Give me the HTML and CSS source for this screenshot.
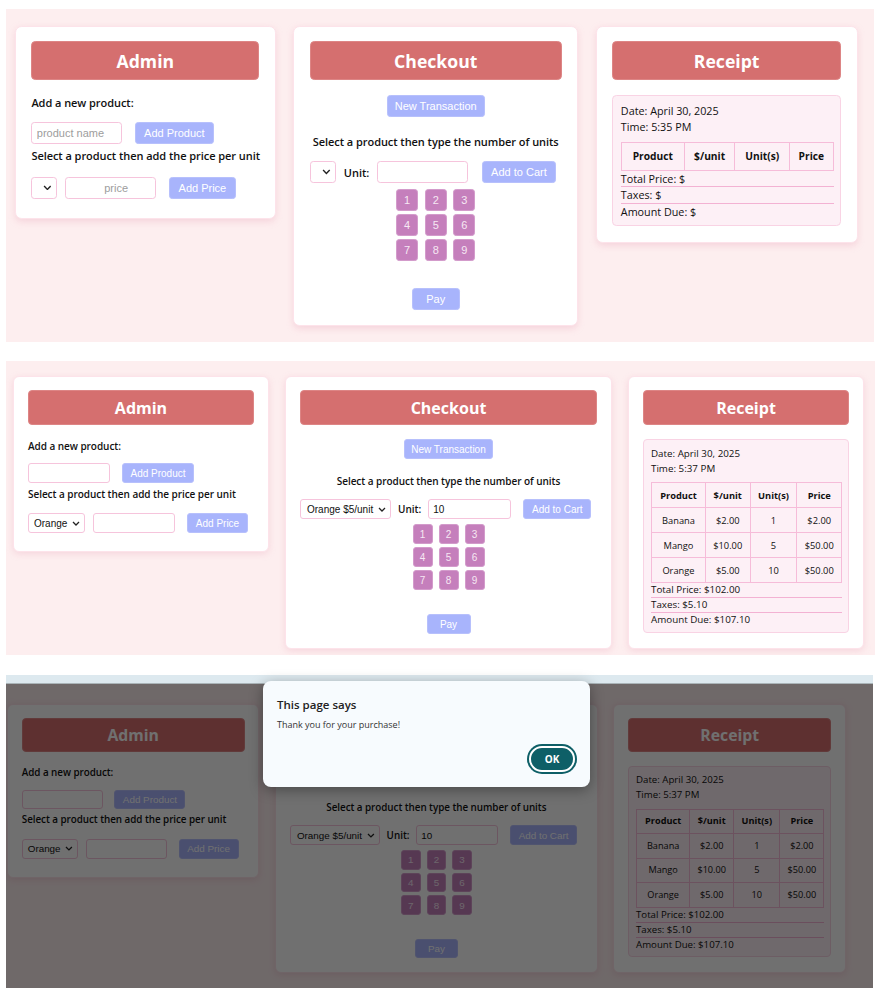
FILE: index.html
```html
<!DOCTYPE html>
<html lang="en">
<head>
<meta charset="utf-8">
<title>POS</title>
<link rel="stylesheet" href="styles.css">
</head>
<body>

<section class="shot shot-1">
  <div class="row row-1">
    <div class="card card-a1">
      <div class="card-title">Admin</div>
      <p class="lbl">Add a new product:</p>
      <div class="ctrl-row">
        <input class="inp inp-name" placeholder="product name">
        <button class="btn btn-addprod">Add Product</button>
      </div>
      <p class="lbl lbl-2">Select a product then add the price per unit</p>
      <div class="ctrl-row ctrl-row-2">
        <div class="sel sel-empty"><svg class="chev" viewBox="0 0 8 5"><path d="M1 1l3 3 3-3"/></svg></div>
        <input class="inp inp-price inp-center" placeholder="price">
        <button class="btn btn-addprice">Add Price</button>
      </div>
    </div>

    <div class="card card-c1">
      <div class="card-title">Checkout</div>
      <div class="center"><button class="btn btn-new">New Transaction</button></div>
      <p class="lbl lbl-center">Select a product then type the number of units</p>
      <div class="ctrl-row ctrl-row-co">
        <div class="sel sel-empty-co"><svg class="chev" viewBox="0 0 8 5"><path d="M1 1l3 3 3-3"/></svg></div>
        <span class="unit-lbl">Unit:</span>
        <input class="inp inp-unit">
        <button class="btn btn-cart">Add to Cart</button>
      </div>
      <div class="keypad">
        <button class="key">1</button><button class="key">2</button><button class="key">3</button>
        <button class="key">4</button><button class="key">5</button><button class="key">6</button>
        <button class="key">7</button><button class="key">8</button><button class="key">9</button>
      </div>
      <div class="center"><button class="btn btn-pay">Pay</button></div>
    </div>

    <div class="card card-r1">
      <div class="card-title">Receipt</div>
      <div class="rbox">
        <div class="rline">Date: April 30, 2025</div>
        <div class="rline">Time: 5:35 PM</div>
        <table class="rtable rtable-empty">
          <tr><th>Product</th><th>$/unit</th><th>Unit(s)</th><th>Price</th></tr>
        </table>
        <div class="tot">Total Price: $</div>
        <div class="tot">Taxes: $</div>
        <div class="tot tot-last">Amount Due: $</div>
      </div>
    </div>
  </div>
</section>

<section class="shot shot-2">
  <div class="row">
    <div class="card card-a2">
      <div class="card-title">Admin</div>
      <p class="lbl">Add a new product:</p>
      <div class="ctrl-row">
        <input class="inp inp-name">
        <button class="btn btn-addprod">Add Product</button>
      </div>
      <p class="lbl lbl-2">Select a product then add the price per unit</p>
      <div class="ctrl-row ctrl-row-2">
        <div class="sel sel-orange">Orange<svg class="chev" viewBox="0 0 8 5"><path d="M1 1l3 3 3-3"/></svg></div>
        <input class="inp inp-price">
        <button class="btn btn-addprice">Add Price</button>
      </div>
    </div>

    <div class="card card-c2">
      <div class="card-title">Checkout</div>
      <div class="center"><button class="btn btn-new">New Transaction</button></div>
      <p class="lbl lbl-center">Select a product then type the number of units</p>
      <div class="ctrl-row ctrl-row-co">
        <div class="sel sel-full">Orange $5/unit<svg class="chev" viewBox="0 0 8 5"><path d="M1 1l3 3 3-3"/></svg></div>
        <span class="unit-lbl">Unit:</span>
        <input class="inp inp-unit" value="10">
        <button class="btn btn-cart">Add to Cart</button>
      </div>
      <div class="keypad">
        <button class="key">1</button><button class="key">2</button><button class="key">3</button>
        <button class="key">4</button><button class="key">5</button><button class="key">6</button>
        <button class="key">7</button><button class="key">8</button><button class="key">9</button>
      </div>
      <div class="center"><button class="btn btn-pay">Pay</button></div>
    </div>

    <div class="card card-r2">
      <div class="card-title">Receipt</div>
      <div class="rbox">
        <div class="rline">Date: April 30, 2025</div>
        <div class="rline">Time: 5:37 PM</div>
        <table class="rtable">
          <tr><th>Product</th><th>$/unit</th><th>Unit(s)</th><th>Price</th></tr>
          <tr><td>Banana</td><td>$2.00</td><td>1</td><td>$2.00</td></tr>
          <tr><td>Mango</td><td>$10.00</td><td>5</td><td>$50.00</td></tr>
          <tr><td>Orange</td><td>$5.00</td><td>10</td><td>$50.00</td></tr>
        </table>
        <div class="tot">Total Price: $102.00</div>
        <div class="tot">Taxes: $5.10</div>
        <div class="tot tot-last">Amount Due: $107.10</div>
      </div>
    </div>
  </div>
</section>

<section class="shot3-wrap">
  <div class="strip"></div>
  <div class="shot shot-3">
    <div class="row row-3">
      <div class="card card-a2">
        <div class="card-title">Admin</div>
        <p class="lbl">Add a new product:</p>
        <div class="ctrl-row">
          <input class="inp inp-name">
          <button class="btn btn-addprod">Add Product</button>
        </div>
        <p class="lbl lbl-2">Select a product then add the price per unit</p>
        <div class="ctrl-row ctrl-row-2">
          <div class="sel sel-orange">Orange<svg class="chev" viewBox="0 0 8 5"><path d="M1 1l3 3 3-3"/></svg></div>
          <input class="inp inp-price">
          <button class="btn btn-addprice">Add Price</button>
        </div>
      </div>

      <div class="card card-c2">
        <div class="card-title">Checkout</div>
        <div class="center"><button class="btn btn-new">New Transaction</button></div>
        <p class="lbl lbl-center">Select a product then type the number of units</p>
        <div class="ctrl-row ctrl-row-co">
          <div class="sel sel-full">Orange $5/unit<svg class="chev" viewBox="0 0 8 5"><path d="M1 1l3 3 3-3"/></svg></div>
          <span class="unit-lbl">Unit:</span>
          <input class="inp inp-unit" value="10">
          <button class="btn btn-cart">Add to Cart</button>
        </div>
        <div class="keypad">
          <button class="key">1</button><button class="key">2</button><button class="key">3</button>
          <button class="key">4</button><button class="key">5</button><button class="key">6</button>
          <button class="key">7</button><button class="key">8</button><button class="key">9</button>
        </div>
        <div class="center"><button class="btn btn-pay">Pay</button></div>
      </div>

      <div class="card card-r2">
        <div class="card-title">Receipt</div>
        <div class="rbox">
          <div class="rline">Date: April 30, 2025</div>
          <div class="rline">Time: 5:37 PM</div>
          <table class="rtable">
            <tr><th>Product</th><th>$/unit</th><th>Unit(s)</th><th>Price</th></tr>
            <tr><td>Banana</td><td>$2.00</td><td>1</td><td>$2.00</td></tr>
            <tr><td>Mango</td><td>$10.00</td><td>5</td><td>$50.00</td></tr>
            <tr><td>Orange</td><td>$5.00</td><td>10</td><td>$50.00</td></tr>
          </table>
          <div class="tot">Total Price: $102.00</div>
          <div class="tot">Taxes: $5.10</div>
          <div class="tot tot-last">Amount Due: $107.10</div>
        </div>
      </div>
    </div>
    <div class="dim"></div>
  </div>
  <div class="dialog">
    <div class="dlg-title">This page says</div>
    <div class="dlg-msg">Thank you for your purchase!</div>
    <div class="dlg-actions"><button class="dlg-ok">OK</button></div>
  </div>
</section>

</body>
</html>
```

FILE: styles.css
```css
* { box-sizing: border-box; }

body {
  margin: 0;
  background: #fff;
  font-family: "Open Sans", "Noto Sans", sans-serif;
  color: #111;
}

p { margin: 0; }

.shot {
  background: #fdeeef;
  overflow: hidden;
}

.shot-1 {
  margin: 9px 9px 0 6px;
  height: 333px;
  padding: 17px 0 0 9px;
}

.row-1 { zoom: 1.1; }

.shot-2 {
  margin: 19px 8px 0 6px;
  height: 294px;
  padding: 15px 0 0 7px;
}

.shot3-wrap {
  position: relative;
  margin: 20px 10px 0 6px;
}

.strip {
  height: 9px;
  background: #dde9ef;
  border-bottom: 1px solid #aab4b8;
}

.shot-3 {
  position: relative;
  height: 304px;
  padding: 20px 0 0 1px;
}

.row-3 { zoom: 0.986; }

.dim {
  position: absolute;
  inset: 0;
  background: rgba(0, 0, 0, 0.56);
}

.row {
  display: flex;
  align-items: flex-start;
  gap: 16px;
}

.card {
  flex: none;
  background: #fff;
  border: 1px solid #fde3ea;
  border-radius: 6px;
  box-shadow: 0 2px 6px rgba(236, 170, 190, 0.35);
  padding: 13px 14px 18px;
}

.card-a1 { width: 237px; }
.card-c1 { width: 259px; padding-bottom: 14px; }
.card-r1 { width: 238px; padding-bottom: 15px; }
.card-a2 { width: 256px; }
.card-c2 { width: 327px; padding-bottom: 14px; }
.card-r2 { width: 236px; padding-bottom: 15px; }

.card-title {
  height: 35px;
  background: #d56f6f;
  border: 1px solid #dd8585;
  border-radius: 4px;
  color: #fff;
  font-weight: 700;
  font-size: 16px;
  display: flex;
  align-items: center;
  justify-content: center;
}

.lbl {
  margin-top: 14px;
  font-size: 10px;
  font-weight: 600;
  line-height: 14px;
  letter-spacing: -0.05px;
  white-space: nowrap;
}

.lbl-2 { margin-top: 4px; }

.lbl-center {
  text-align: center;
  margin-top: 15px;
}

.center {
  display: flex;
  justify-content: center;
}

.ctrl-row {
  display: flex;
  align-items: center;
  margin-top: 10px;
}

.ctrl-row-2 { margin-top: 12px; }
.ctrl-row-co { margin-top: 11px; }

.inp {
  flex: none;
  height: 20px;
  border: 1px solid #f6c4dc;
  border-radius: 3px;
  background: #fff;
  font: 10px "Liberation Sans", Arial, sans-serif;
  color: #111;
  padding: 0 4px;
  outline: none;
}

.inp::placeholder { color: #9d9d9d; }

.inp-name { width: 82px; }
.inp-price { width: 82px; margin-left: 8px; }
.inp-center { text-align: center; padding-left: 14px; }
.inp-unit { width: 83px; margin-left: 7px; }

.btn {
  flex: none;
  height: 20px;
  background: #a8b4fc;
  color: #fff;
  border: 1px solid #b7c0fc;
  border-radius: 3px;
  font: 10px "Liberation Sans", Arial, sans-serif;
  padding: 0;
}

.btn-addprod { width: 72px; margin-left: 12px; }
.btn-addprice { width: 61px; margin-left: 12px; }
.btn-new { width: 89px; margin-top: 14px; }
.btn-cart { width: 68px; margin-left: 12px; }
.btn-pay { width: 44px; margin-top: 24px; }

.sel {
  flex: none;
  height: 20px;
  border: 1px solid #f6c4dc;
  border-radius: 3px;
  background: #fff;
  display: flex;
  align-items: center;
  justify-content: space-between;
  font: 10px "Liberation Sans", Arial, sans-serif;
  color: #111;
  padding: 0 4px 0 6px;
}

.sel-empty { width: 23px; justify-content: flex-end; }
.sel-empty-co { width: 24px; justify-content: flex-end; }
.sel-orange { width: 57px; padding-left: 5px; }
.sel-full { width: 91px; padding-left: 6px; }

.chev {
  width: 8px;
  height: 5px;
  fill: none;
  stroke: #222;
  stroke-width: 1.3;
}

.unit-lbl {
  margin-left: 7px;
  font-size: 10px;
  font-weight: 600;
}

.keypad {
  display: grid;
  grid-template-columns: repeat(3, 20px);
  grid-auto-rows: 20px;
  gap: 3px 6px;
  justify-content: center;
  margin-top: 5px;
}

.key {
  background: #c57fbc;
  border: 1px solid #d39bcb;
  border-radius: 3px;
  color: #f6e8f3;
  font: 10px "Liberation Sans", Arial, sans-serif;
  padding: 0;
}

.rbox {
  margin-top: 14px;
  background: #fdf0f6;
  border: 1px solid #f9d3e4;
  border-radius: 4px;
  padding: 6px 6px 5px 7px;
  font-size: 9.8px;
  line-height: 15px;
}

.rtable {
  width: 100%;
  border-collapse: collapse;
  margin-top: 6px;
  font-size: 9.3px;
}

.rtable th,
.rtable td {
  border: 1px solid #f6bcd9;
  text-align: center;
  height: 25px;
  padding: 0 3px;
}

.rtable th { font-weight: 700; }

.tot {
  line-height: 14px;
  border-bottom: 1px solid #f3b2d3;
}

.tot-last { border-bottom: 0; }

.dialog {
  position: absolute;
  left: 257px;
  top: 6px;
  width: 327px;
  height: 106px;
  background: #f7fbfe;
  border-radius: 8px;
  box-shadow: 0 3px 14px rgba(0, 0, 0, 0.35);
  padding: 16px 13px 13px 14px;
  display: flex;
  flex-direction: column;
}

.dlg-title {
  font-size: 11.5px;
  font-weight: 600;
  color: #222;
  line-height: 15px;
}

.dlg-msg {
  margin-top: 7px;
  font-size: 9px;
  color: #333;
  line-height: 12px;
}

.dlg-actions {
  margin-top: auto;
  display: flex;
  justify-content: flex-end;
}

.dlg-ok {
  width: 46px;
  height: 26px;
  margin: 2px;
  border-radius: 13px;
  background: #0e5f67;
  border: 2px solid #fff;
  box-shadow: 0 0 0 2px #0e5f67;
  color: #fff;
  font: 700 10px "Open Sans", sans-serif;
  padding: 0;
}
```
